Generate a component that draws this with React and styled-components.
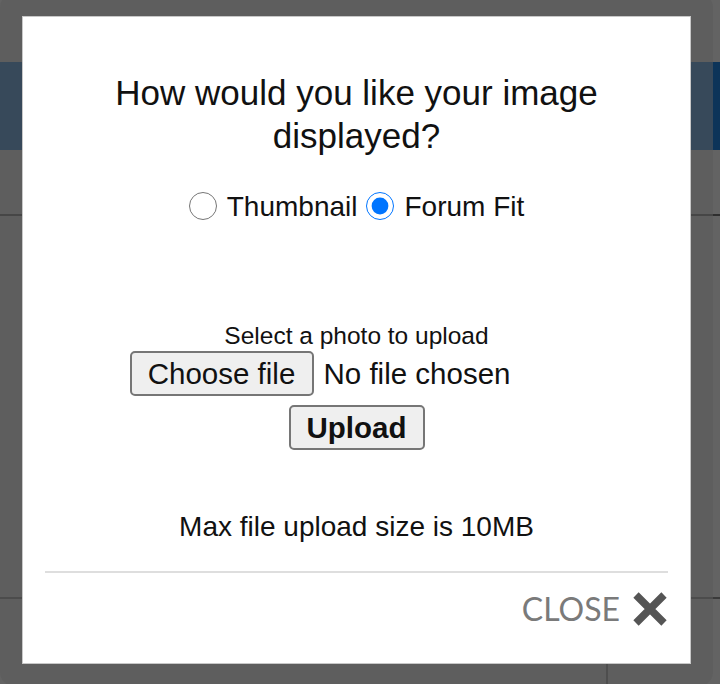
import React, { useState } from "react";
import styled, { createGlobalStyle } from "styled-components";

const GlobalStyle = createGlobalStyle`
  html, body {
    margin: 0;
    padding: 0;
    height: 100%;
    overflow: hidden;
  }
  body {
    font-family: "Liberation Sans", Arial, sans-serif;
    background: #636363;
  }
`;

function App() {
  const [display, setDisplay] = useState("forum");
  const [fileName, setFileName] = useState("");

  return (
    <>
      <GlobalStyle />
      <StyledPage>
        <div className="header" />
        <div className="rule" />
        <div className="content" />
        <div className="footer">
          <div className="footerLeft" />
          <div className="footerRight" />
        </div>
      </StyledPage>

      <ModalFrame>
        <ModalBody>
          <Title>How would you like your image displayed?</Title>

          <RadioRow>
            <label>
              <input
                type="radio"
                name="display"
                value="thumbnail"
                checked={display === "thumbnail"}
                onChange={() => setDisplay("thumbnail")}
              />
              <span>Thumbnail</span>
            </label>
            <label>
              <input
                type="radio"
                name="display"
                value="forum"
                checked={display === "forum"}
                onChange={() => setDisplay("forum")}
              />
              <span>Forum Fit</span>
            </label>
          </RadioRow>

          <UploadForm>
            <span className="hint">Select a photo to upload</span>
            <FilePicker>
              <ChooseButton>
                Choose file
                <input
                  type="file"
                  accept="image/*"
                  onChange={(e) =>
                    setFileName(e.target.files[0] ? e.target.files[0].name : "")
                  }
                />
              </ChooseButton>
              <span>{fileName || "No file chosen"}</span>
            </FilePicker>
            <UploadButton type="button">Upload</UploadButton>
          </UploadForm>

          <MaxSize>Max file upload size is 10MB</MaxSize>

          <Footer>
            <CloseButton type="button">
              <span>CLOSE</span>
              <svg width="36" height="34" viewBox="0 0 36 34" aria-hidden="true">
                <path
                  d="M4 3 L32 31 M32 3 L4 31"
                  stroke="#555"
                  strokeWidth="7.5"
                  strokeLinecap="butt"
                  fill="none"
                />
              </svg>
            </CloseButton>
          </Footer>
        </ModalBody>
      </ModalFrame>
    </>
  );
}

export default App;

const StyledPage = styled.div`
  display: flex;
  flex-direction: column;
  height: 684px;

  .header {
    margin-top: 62px;
    height: 88px;
    background: #0c3459;
  }

  .rule {
    margin-top: 64px;
    height: 2px;
    background: #2e2e2e;
  }

  .content {
    height: 381px;
  }

  .footer {
    flex: 1;
    display: flex;
    border-top: 2px solid #3a3a3a;
  }

  .footerLeft {
    width: 606px;
    border-right: 2px solid #3f3f3f;
  }

  .footerRight {
    flex: 1;
  }
`;

const ModalFrame = styled.div`
  position: fixed;
  left: 0;
  top: -6px;
  width: 713px;
  height: 692px;
  box-sizing: border-box;
  border: 22px solid rgba(91, 91, 91, 0.55);
  border-radius: 14px;
  background-clip: padding-box;
  display: flex;
`;

const ModalBody = styled.div`
  flex: 1;
  background: #fff;
  box-shadow: inset 0 0 0 1px #c8c8c8;
  padding: 55px 23px 0;
  display: flex;
  flex-direction: column;
  align-items: center;
  color: #111;
`;

const Title = styled.h2`
  margin: 0;
  font-family: "Liberation Sans", Arial, sans-serif;
  font-weight: 400;
  font-size: 35px;
  line-height: 43px;
  text-align: center;
  color: #111;
`;

const RadioRow = styled.div`
  margin-top: 34px;
  display: flex;
  align-items: center;
  gap: 9px;

  label {
    display: flex;
    align-items: center;
    gap: 10px;
    font-size: 28px;
    line-height: 32px;
    color: #111;
  }

  input {
    width: 28px;
    height: 28px;
    margin: -3px 0 0;
    accent-color: #0075ff;
  }
`;

const UploadForm = styled.form`
  margin-top: 99px;
  display: flex;
  flex-direction: column;
  align-items: center;

  .hint {
    font-size: 24.5px;
    line-height: 28px;
    color: #111;
  }
`;

const FilePicker = styled.div`
  margin-top: 1px;
  width: 454px;
  display: flex;
  align-items: center;
  gap: 10px;
  font-size: 29.5px;
  color: #111;
`;

const ChooseButton = styled.label`
  position: relative;
  box-sizing: border-box;
  width: 184px;
  height: 45px;
  display: flex;
  align-items: center;
  justify-content: center;
  background: #efefef;
  border: 2px solid #767676;
  border-radius: 5px;
  font-size: 29.5px;
  color: #111;
  cursor: pointer;

  input {
    display: none;
  }
`;

const UploadButton = styled.button`
  margin-top: 9px;
  box-sizing: border-box;
  width: 136px;
  height: 45px;
  padding: 0;
  font-family: "Liberation Sans", Arial, sans-serif;
  font-size: 29.5px;
  font-weight: 700;
  color: #111;
  background: #efefef;
  border: 2px solid #767676;
  border-radius: 5px;
`;

const MaxSize = styled.p`
  margin: 61px 0 0;
  font-size: 28px;
  line-height: 32px;
  color: #111;
`;

const Footer = styled.div`
  align-self: stretch;
  margin-top: 28px;
  border-top: 2px solid #dedede;
  display: flex;
  justify-content: flex-end;
  padding-top: 19px;
`;

const CloseButton = styled.button`
  display: flex;
  align-items: center;
  gap: 12px;
  padding: 0;
  border: none;
  background: none;
  cursor: pointer;

  span {
    font-family: Lato, "Open Sans", sans-serif;
    font-size: 32px;
    line-height: 34px;
    color: #7a7a7a;
  }
`;
